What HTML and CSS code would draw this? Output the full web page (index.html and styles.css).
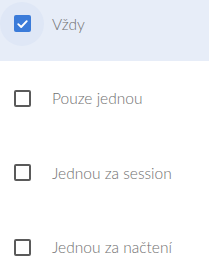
FILE: index.html
```html
<!DOCTYPE html>
<html lang="cs">
<head>
    <meta charset="UTF-8">
    <meta name="viewport" content="width=device-width, initial-scale=1.0">
    <title>Zobrazení</title>
    <link rel="stylesheet" href="styles.css">
</head>
<body>
    <ul class="options">
        <li class="option selected">
            <span class="check-wrap"><span class="check checked">
                <svg viewBox="0 0 18 18" width="18" height="18"><path d="M4.5 9.2 L7.6 12.2 L13.5 6" fill="none" stroke="#fff" stroke-width="2" stroke-linecap="round" stroke-linejoin="round"/></svg>
            </span></span>
            <span class="label">Vždy</span>
        </li>
        <li class="option">
            <span class="check-wrap"><span class="check"></span></span>
            <span class="label">Pouze jednou</span>
        </li>
        <li class="option">
            <span class="check-wrap"><span class="check"></span></span>
            <span class="label">Jednou za session</span>
        </li>
        <li class="option">
            <span class="check-wrap"><span class="check"></span></span>
            <span class="label">Jednou za načtení</span>
        </li>
    </ul>
</body>
</html>
```

FILE: styles.css
```css
body {
    margin: 0;
    background: #fff;
    font-family: Lato, "Open Sans", sans-serif;
    overflow: hidden;
}
.options {
    list-style: none;
    margin: -13.5px 0 0 0;
    padding: 0;
}
.option {
    display: flex;
    align-items: center;
    height: 74.5px;
}
.option.selected {
    background: #e7edf8;
}
.check-wrap {
    width: 44px;
    height: 44px;
    border-radius: 50%;
    display: flex;
    align-items: center;
    justify-content: center;
    flex-shrink: 0;
}
.selected .check-wrap {
    background: #dfe7f6;
}
.check {
    width: 17px;
    height: 17px;
    box-sizing: border-box;
    border: 2px solid #5a5a5a;
    border-radius: 2px;
    display: flex;
    align-items: center;
    justify-content: center;
}
.check.checked {
    background: #3b7bd9;
    border: none;
}
.label {
    margin-left: 8px;
    font-size: 15.5px;
    font-weight: 300;
    color: #707070;
}
```
